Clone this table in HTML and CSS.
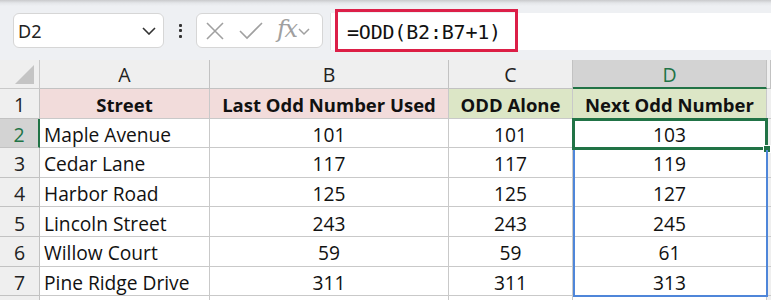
FILE: index.html
```html
<!DOCTYPE html>
<html>
<head>
<meta charset="utf-8">
<link rel="stylesheet" href="styles.css">
</head>
<body>
<div class="app">
  <div class="toolbar">
    <div class="namebox">
      <span class="namebox-text">D2</span>
      <svg class="chev" width="14" height="8" viewBox="0 0 14 8"><path d="M1 1 L7 7 L13 1" fill="none" stroke="#333" stroke-width="1.6"/></svg>
    </div>
    <div class="dots"><span></span><span></span><span></span></div>
    <div class="fxbox">
      <svg class="ico" width="20" height="20" viewBox="0 0 20 20"><path d="M2 2 L18 18 M18 2 L2 18" stroke="#a0a0a0" stroke-width="1.6" fill="none"/></svg>
      <svg class="ico" width="26" height="20" viewBox="0 0 26 20"><path d="M2 10 L9 17 L24 2" stroke="#a0a0a0" stroke-width="1.6" fill="none"/></svg>
      <span class="fx">fx</span>
      <svg class="ico chev2" width="12" height="8" viewBox="0 0 12 8"><path d="M1 1 L6 6 L11 1" fill="none" stroke="#a0a0a0" stroke-width="1.5"/></svg>
    </div>
    <div class="formula">
      <span class="formula-text">=ODD(B2:B7+1)</span>
    </div>
    <div class="redbox"></div>
  </div>

  <div class="sheet">
    <div class="grid">
      <div class="corner"><span class="tri"></span></div>
      <div class="colhdr">A</div>
      <div class="colhdr">B</div>
      <div class="colhdr">C</div>
      <div class="colhdr sel">D</div>
      <div class="colhdr edge"></div>

      <div class="rowhdr">1</div>
      <div class="cell hdr pink">Street</div>
      <div class="cell hdr pink">Last Odd Number Used</div>
      <div class="cell hdr green">ODD Alone</div>
      <div class="cell hdr green">Next Odd Number</div>
      <div class="cell edge"></div>

      <div class="rowhdr sel">2</div>
      <div class="cell">Maple Avenue</div>
      <div class="cell num">101</div>
      <div class="cell num">101</div>
      <div class="cell num">103</div>
      <div class="cell edge"></div>

      <div class="rowhdr">3</div>
      <div class="cell">Cedar Lane</div>
      <div class="cell num">117</div>
      <div class="cell num">117</div>
      <div class="cell num">119</div>
      <div class="cell edge"></div>

      <div class="rowhdr">4</div>
      <div class="cell">Harbor Road</div>
      <div class="cell num">125</div>
      <div class="cell num">125</div>
      <div class="cell num">127</div>
      <div class="cell edge"></div>

      <div class="rowhdr">5</div>
      <div class="cell">Lincoln Street</div>
      <div class="cell num">243</div>
      <div class="cell num">243</div>
      <div class="cell num">245</div>
      <div class="cell edge"></div>

      <div class="rowhdr">6</div>
      <div class="cell">Willow Court</div>
      <div class="cell num">59</div>
      <div class="cell num">59</div>
      <div class="cell num">61</div>
      <div class="cell edge"></div>

      <div class="rowhdr">7</div>
      <div class="cell">Pine Ridge Drive</div>
      <div class="cell num">311</div>
      <div class="cell num">311</div>
      <div class="cell num">313</div>
      <div class="cell edge"></div>

      <div class="rowhdr"></div>
      <div class="cell"></div>
      <div class="cell"></div>
      <div class="cell"></div>
      <div class="cell"></div>
      <div class="cell edge"></div>
    </div>
    <div class="sel-active"><span class="handle"></span></div>
    <div class="sel-range"></div>
  </div>
</div>
</body>
</html>
```

FILE: styles.css
```css
* { box-sizing: border-box; }
html, body { margin: 0; padding: 0; }
body {
  width: 771px;
  height: 300px;
  overflow: hidden;
  background: #eef0f3;
  font-family: "Open Sans", "Noto Sans", sans-serif;
}
.app { position: relative; width: 771px; height: 300px; }

.toolbar {
  position: relative;
  height: 60px;
  display: flex;
  align-items: flex-start;
  padding: 13px 0 0 13px;
  background: linear-gradient(#c9cacc 0px, #e4e6e9 3px, #eef0f3 6px);
}
.namebox {
  width: 151px;
  height: 35px;
  background: #fff;
  border: 1px solid #d6d6d6;
  border-radius: 6px;
  display: flex;
  align-items: center;
  justify-content: space-between;
  padding: 0 7px 0 4px;
}
.namebox-text {
  font-family: "Noto Sans", "Open Sans", sans-serif;
  font-size: 18px;
  color: #222;
}
.dots {
  width: 32px;
  height: 35px;
  display: flex;
  flex-direction: column;
  align-items: center;
  justify-content: center;
  gap: 2.5px;
}
.dots span {
  width: 3px;
  height: 3px;
  border-radius: 1px;
  background: #333;
}
.fxbox {
  width: 127px;
  height: 35px;
  background: #fff;
  border: 1px solid #d6d6d6;
  border-radius: 6px;
  display: flex;
  align-items: center;
  padding: 0 6px 0 8px;
  gap: 0;
}
.fxbox .ico { display: block; }
.fxbox .ico:first-child { margin-right: 13px; }
.fx {
  font-family: "DejaVu Serif", "Liberation Serif", serif;
  font-style: italic;
  font-size: 24px;
  color: #a0a0a0;
  margin-left: 13px;
  margin-right: 2px;
  line-height: 1;
  letter-spacing: -1.5px;
  margin-top: -3px;
}
.chev2 { margin-top: 2px; }
.formula {
  flex: 1;
  height: 37px;
  margin-left: 7px;
  background: #fff;
  border-left: 1px solid #e2e2e2;
  display: flex;
  align-items: center;
  padding-left: 16px;
}
.formula-text {
  font-family: "DejaVu Sans Mono", "Liberation Mono", monospace;
  font-size: 20px;
  color: #111;
  letter-spacing: -0.2px;
}
.redbox {
  position: absolute;
  left: 335px;
  top: 9px;
  width: 183px;
  height: 43px;
  border: 3px solid #dc1f48;
}

.sheet {
  position: relative;
  height: 240px;
  overflow: hidden;
  background: #fff;
}
.grid {
  display: grid;
  grid-template-columns: 40px 170px 239px 124px 194px 4px;
  grid-template-rows: 29px repeat(7, 29.6px) 30px;
}
.grid > div {
  border-right: 1px solid #c9c9c9;
  border-bottom: 1px solid #c9c9c9;
  display: flex;
  align-items: center;
  font-size: 19.2px;
  color: #111;
  white-space: nowrap;
  overflow: hidden;
  padding-top: 3px;
}
.corner {
  background: #efefef;
  position: relative;
}
.tri {
  position: absolute;
  right: 5px;
  bottom: 4px;
  width: 0;
  height: 0;
  border-left: 19px solid transparent;
  border-bottom: 19px solid #c4c4c4;
}
.colhdr {
  background: #efefef;
  justify-content: center;
  font-size: 19.5px !important;
  color: #222 !important;
  border-color: #c2c2c2 !important;
  padding-top: 1px !important;
}
.colhdr.sel {
  background: #d3d3d3;
  color: #217346 !important;
  border-bottom: 2px solid #217346 !important;
}
.colhdr.edge { background: #efefef; }
.rowhdr {
  background: #efefef;
  justify-content: center;
  font-size: 19.5px !important;
  color: #222 !important;
  border-color: #c2c2c2 !important;
}
.rowhdr.sel {
  background: #d3d3d3;
  color: #217346 !important;
  border-right: 2px solid #217346 !important;
}
.cell { padding-left: 4px; background: #fff; }
.cell.edge { background: #efefef; border-right: none !important; }
.cell.num { justify-content: center; padding-left: 0; }
.cell.hdr { justify-content: center; padding-left: 0; font-weight: 700; font-size: 18.5px !important; }
.pink { background: #f2dcdb; }
.green { background: #dce6c6; }

.sel-active {
  position: absolute;
  left: 572px;
  top: 58px;
  width: 196px;
  height: 32px;
  border: 3px solid #217346;
}
.handle {
  position: absolute;
  right: -6px;
  bottom: -6px;
  width: 8px;
  height: 8px;
  background: #217346;
  border: 1px solid #fff;
}
.sel-range {
  position: absolute;
  left: 573px;
  top: 90px;
  width: 195px;
  height: 147px;
  border: 2px solid #4f86d9;
  border-top: none;
}
```
